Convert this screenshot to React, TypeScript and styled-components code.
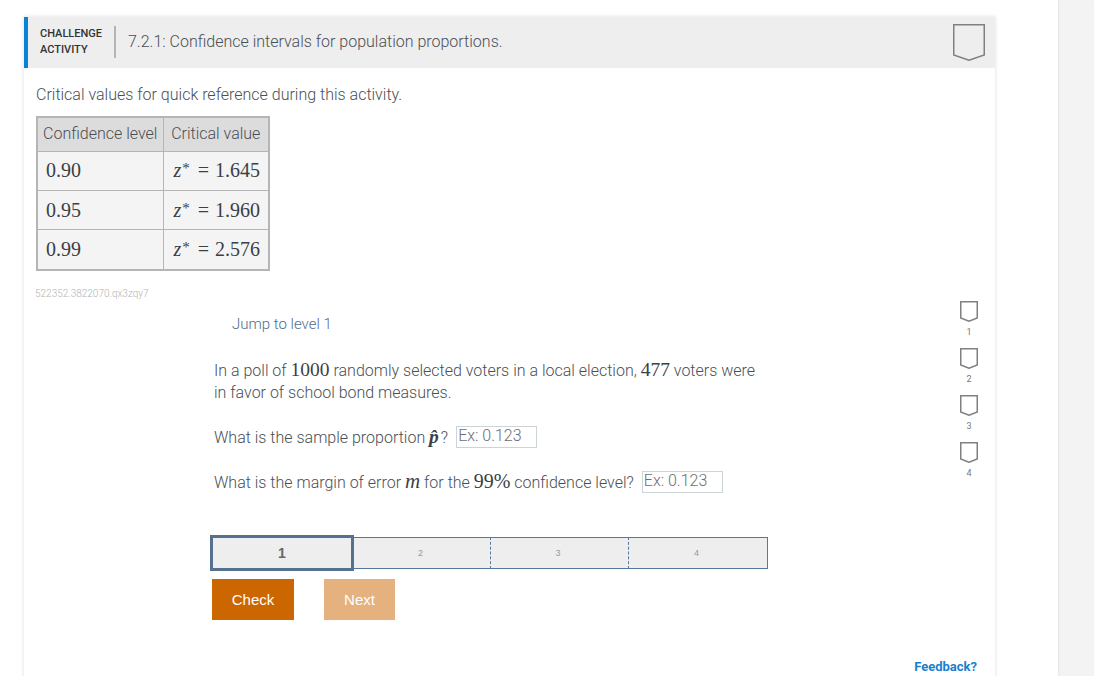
import React from "react";
import styled, { createGlobalStyle } from "styled-components";

const GlobalStyle = createGlobalStyle`
  html, body {
    margin: 0;
    padding: 0;
    background: #fff;
    font-family: Roboto, "Liberation Sans", sans-serif;
    font-weight: 300;
    color: #4a4f55;
  }
`;

const Shield: React.FC<{ w: number; h: number; notch: number }> = ({ w, h, notch }) => (
  <svg width={w} height={h} viewBox={`0 0 ${w} ${h}`} fill="none">
    <path
      d={`M0.75 0.75H${w - 0.75}V${h - notch}L${w / 2} ${h - 0.75}L0.75 ${h - notch}Z`}
      stroke="#808080"
      strokeWidth="1.5"
    />
  </svg>
);

const App: React.FC = () => {
  const rows = [
    ["0.90", "1.645"],
    ["0.95", "1.960"],
    ["0.99", "2.576"],
  ];
  return (
    <>
      <GlobalStyle />
      <Page>
        <Main>
          <Card>
            <Header>
              <Label>
                CHALLENGE
                <br />
                ACTIVITY
              </Label>
              <Title>7.2.1: Confidence intervals for population proportions.</Title>
              <Shield w={32} h={37} notch={6} />
            </Header>
            <Intro>Critical values for quick reference during this activity.</Intro>
            <ValuesTable>
              <thead>
                <tr>
                  <HeadCell>Confidence level</HeadCell>
                  <HeadCell>Critical value</HeadCell>
                </tr>
              </thead>
              <tbody>
                {rows.map(([level, value]) => (
                  <tr key={level}>
                    <LevelCell>
                      <MathText>{level}</MathText>
                    </LevelCell>
                    <ValueCell>
                      <MathText>
                        <i>z</i>
                        <Star>*</Star>
                        <Equals>=</Equals>
                        {value}
                      </MathText>
                    </ValueCell>
                  </tr>
                ))}
              </tbody>
            </ValuesTable>
            <ActivityCode>522352.3822070.qx3zqy7</ActivityCode>
            <ActivityRow>
              <Question>
                <JumpLink>Jump to level 1</JumpLink>
                <Paragraph>
                  In a poll of <InlineMath>1000</InlineMath> randomly selected voters in a local election,{" "}
                  <InlineMath>477</InlineMath> voters were
                  <br />
                  in favor of school bond measures.
                </Paragraph>
                <PromptLine>
                  What is the sample proportion{" "}
                  <InlineMath>
                    <HatVar>p̂</HatVar>
                  </InlineMath>
                  ?<AnswerBox placeholder="Ex: 0.123" readOnly />
                </PromptLine>
                <PromptLine>
                  What is the margin of error{" "}
                  <MathText>
                    <MathVar>m</MathVar>
                  </MathText>{" "}
                  for the <MathText>99%</MathText> confidence level?
                  <AnswerBox placeholder="Ex: 0.123" readOnly />
                </PromptLine>
                <Progress>
                  <Step $active $width={144}>
                    1
                  </Step>
                  <Step $width={136}>2</Step>
                  <Step $dashed $width={138}>
                    3
                  </Step>
                  <Step $dashed $last $width={140}>
                    4
                  </Step>
                </Progress>
                <Buttons>
                  <ActionButton>Check</ActionButton>
                  <ActionButton $disabled>Next</ActionButton>
                </Buttons>
              </Question>
              <LevelList>
                {[1, 2, 3, 4].map((n) => (
                  <LevelItem key={n}>
                    <Shield w={18} h={21} notch={4} />
                    <LevelNumber>{n}</LevelNumber>
                  </LevelItem>
                ))}
              </LevelList>
            </ActivityRow>
            <FeedbackRow>
              <Feedback>Feedback?</Feedback>
            </FeedbackRow>
          </Card>
        </Main>
        <SideBar />
      </Page>
    </>
  );
};

export default App;

const Page = styled.div`
  display: flex;
  height: 676px;
  overflow: hidden;
`;

const Main = styled.div`
  width: 1058px;
  flex-shrink: 0;
  padding: 17px 63px 0 24px;
  box-sizing: border-box;
`;

const SideBar = styled.div`
  flex: 1;
  background: #f3f3f3;
  box-shadow: inset 2px 0 2px -1px #e6e6e6;
`;

const Card = styled.div`
  background: #fff;
  box-shadow: 0 0 3px 1px rgba(0, 0, 0, 0.09);
  height: 700px;
`;

const Header = styled.div`
  display: flex;
  align-items: center;
  height: 51px;
  background: #eeeeee;
  border-left: 4px solid #0a83d6;
  padding: 0 10px 0 12px;
`;

const Label = styled.div`
  font-size: 11px;
  font-weight: 500;
  line-height: 16px;
  color: #333;
  padding-right: 12px;
  border-right: 2px solid #b4b4b4;
  margin: 0 12px 2px 0;
`;

const Title = styled.div`
  flex: 1;
  font-size: 16px;
  line-height: 30px;
  margin-bottom: 2px;
  color: #4a4f55;
`;

const Intro = styled.p`
  margin: 17px 0 11px 12px;
  font-size: 16px;
  line-height: 20px;
`;

const ValuesTable = styled.table`
  margin-left: 12px;
  width: 234px;
  height: 155px;
  table-layout: fixed;
  border-collapse: collapse;
  border: 2px solid #b5b5b5;
  font-size: 16px;
`;

const HeadCell = styled.th`
  background: #dcdcdc;
  border: 1px solid #b5b5b5;
  font-weight: 300;
  height: 34px;
  padding: 0 0 2px;
  box-sizing: border-box;
  text-align: center;
  white-space: nowrap;

  &:first-child {
    width: 126px;
  }
`;

const LevelCell = styled.td`
  background: #f4f4f4;
  border: 1px solid #b5b5b5;
  padding: 0 8px;
`;

const ValueCell = styled(LevelCell)`
  padding: 0 8px;
  text-align: right;
  white-space: nowrap;
`;

const MathText = styled.span`
  font-family: "Liberation Serif", serif;
  font-size: 20px;
  font-weight: 400;
  color: #3a3f45;
`;

const InlineMath = styled(MathText)`
  font-size: 19.5px;
`;

const MathVar = styled.i`
  font-size: 21px;
`;

const HatVar = styled.i`
  font-weight: 700;
  letter-spacing: 2px;
`;

const Star = styled.span`
  font-size: 15px;
  line-height: 0;
  margin-left: 1px;
  vertical-align: 4px;
`;

const Equals = styled.span`
  margin: 0 6px 0 8px;
`;

const ActivityCode = styled.div`
  margin: 16px 0 0 11px;
  font-size: 10px;
  line-height: 14px;
  color: #b3b3b3;
`;

const ActivityRow = styled.div`
  display: flex;
  justify-content: space-between;
  padding-right: 17px;
`;

const Question = styled.div`
  padding: 13px 0 0 186px;
`;

const JumpLink = styled.div`
  margin-left: 22px;
  font-size: 15px;
  line-height: 20px;
  font-weight: 300;
  color: #4f6c8c;
`;

const Paragraph = styled.p`
  margin: 25px 0 22px 4px;
  font-size: 16px;
  line-height: 22px;
`;

const PromptLine = styled.div`
  margin: 21px 0 0 4px;
  font-size: 16px;
  line-height: 22px;
`;

const AnswerBox = styled.input`
  width: 81px;
  height: 22px;
  margin-left: 8px;
  padding: 0 0 3px 1px;
  box-sizing: border-box;
  border: 1px solid #ccd4d8;
  font-family: Roboto, sans-serif;
  font-size: 16px;
  font-weight: 300;
  vertical-align: 2px;

  &::placeholder {
    color: #6e6e6e;
    opacity: 1;
  }
`;

const Progress = styled.div`
  display: flex;
  align-items: center;
  width: 558px;
  height: 36px;
  margin-top: 41px;
`;

const Step = styled.div<{ $active?: boolean; $dashed?: boolean; $last?: boolean; $width: number }>`
  flex: 0 0 ${({ $width }) => $width}px;
  height: ${({ $active }) => ($active ? "36px" : "32px")};
  box-sizing: border-box;
  display: flex;
  align-items: center;
  justify-content: center;
  background: #eeeeee;
  font-family: "Liberation Sans", sans-serif;
  font-weight: ${({ $active }) => ($active ? 700 : 400)};
  font-size: ${({ $active }) => ($active ? "14px" : "9px")};
  color: ${({ $active }) => ($active ? "#666" : "#999")};
  border: ${({ $active }) => ($active ? "3px solid #56708f" : "1px solid #56789c")};
  border-left: ${({ $active, $dashed }) =>
    $active ? "3px solid #56708f" : $dashed ? "1px dashed #56789c" : "none"};
  ${({ $active }) => !$active && "border-right: none; padding-right: 3px;"}
  ${({ $last }) => $last && "border-right: 1px solid #56789c;"}
`;

const Buttons = styled.div`
  display: flex;
  gap: 30px;
  margin: 8px 0 0 2px;
`;

const ActionButton = styled.button<{ $disabled?: boolean }>`
  height: 41px;
  width: ${({ $disabled }) => ($disabled ? "71px" : "82px")};
  padding: 0;
  border: none;
  background: ${({ $disabled }) => ($disabled ? "#e5b17f" : "#cc6600")};
  color: #fff;
  font-family: "Liberation Sans", sans-serif;
  font-size: 15px;
  font-weight: 400;
`;

const LevelList = styled.div`
  display: flex;
  flex-direction: column;
  gap: 9px;
`;

const LevelItem = styled.div`
  display: flex;
  flex-direction: column;
  align-items: center;
  width: 18px;
  height: 38px;

  svg {
    flex-shrink: 0;
  }
`;

const LevelNumber = styled.span`
  font-size: 9px;
  line-height: 11px;
  margin-top: 5px;
  font-family: Roboto, sans-serif;
  font-weight: 400;
  color: #777;
`;

const FeedbackRow = styled.div`
  display: flex;
  justify-content: flex-end;
  margin-top: 39px;
  padding-right: 18px;
`;

const Feedback = styled.span`
  font-size: 13px;
  line-height: 16px;
  font-weight: 700;
  color: #1a7fd0;
`;
